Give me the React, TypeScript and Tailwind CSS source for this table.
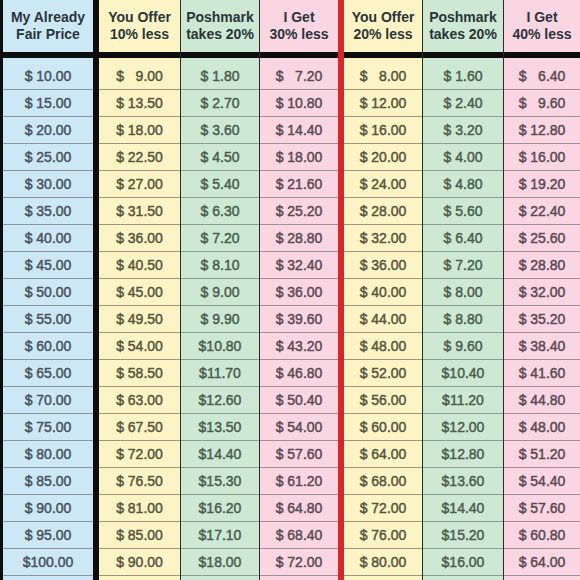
const bases = Array.from({ length: 19 }, (_, i) => 10 + i * 5);

// "$" + value, padded so the decimals line up inside a centred cell
const fmt = (v: number, w: number) => {
  const s = v.toFixed(2);
  if (s.length >= w) return "$" + s;
  return "$ " + "\u2007".repeat(w - s.length - 1) + s;
};

type Col = {
  title: [string, string];
  width: string;
  bg: string;
  text: string;
  line: string;
  values: string[];
};

// the printed chart says $85.00 on the $95 row, keep it
const offer10 = bases.map((b) => (b === 95 ? 85 : b * 0.9));

const columns: Col[] = [
  {
    title: ["My Already", "Fair Price"],
    width: "w-[90px]",
    bg: "bg-[#cde8f5]",
    text: "text-[#48535d]",
    line: "border-[#8a959c]",
    values: bases.map((b) => fmt(b, 6)),
  },
  {
    title: ["You Offer", "10% less"],
    width: "w-[81px]",
    bg: "bg-[#fcf4c4]",
    text: "text-[#56553f]",
    line: "border-[#9a977c]",
    values: offer10.map((v) => fmt(v, 6)),
  },
  {
    title: ["Poshmark", "takes 20%"],
    width: "w-[78px]",
    bg: "bg-[#cde8d3]",
    text: "text-[#4a5d4f]",
    line: "border-[#8a9d8f]",
    values: bases.map((b) => fmt(b * 0.18, 5)),
  },
  {
    title: ["I Get", "30% less"],
    width: "w-[78px]",
    bg: "bg-[#fad5e2]",
    text: "text-[#594b53]",
    line: "border-[#a08e96]",
    values: bases.map((b) => fmt(b * 0.72, 6)),
  },
  {
    title: ["You Offer", "20% less"],
    width: "w-[78px]",
    bg: "bg-[#fcf4c4]",
    text: "text-[#56553f]",
    line: "border-[#9a977c]",
    values: bases.map((b) => fmt(b * 0.8, 6)),
  },
  {
    title: ["Poshmark", "takes 20%"],
    width: "w-[80px]",
    bg: "bg-[#cde8d3]",
    text: "text-[#4a5d4f]",
    line: "border-[#8a9d8f]",
    values: bases.map((b) => fmt(b * 0.16, 5)),
  },
  {
    title: ["I Get", "40% less"],
    width: "w-[76px]",
    bg: "bg-[#fad5e2]",
    text: "text-[#594b53]",
    line: "border-[#a08e96]",
    values: bases.map((b) => fmt(b * 0.64, 6)),
  },
];

const Column = ({ col }: { col: Col }) => (
  <div className={`flex flex-col h-full shrink-0 ${col.width}`}>
    <div
      className={`h-[52px] shrink-0 flex flex-col items-center justify-center text-[14px] leading-[17px] font-bold text-[#2b343a] ${col.bg}`}
    >
      <span>{col.title[0]}</span>
      <span>{col.title[1]}</span>
    </div>
    <div className="h-[6px] shrink-0 bg-[#0d0d0d]" />
    <div className={`flex-1 flex flex-col ${col.bg}`}>
      {col.values.map((v, i) => (
        <div
          key={i}
          className={`shrink-0 flex items-center justify-center border-b text-[14px] whitespace-pre [-webkit-text-stroke:0.45px_currentColor] ${col.line} ${col.text} ${
            i === 0 ? "h-[32px] pt-[5px]" : "h-[27px]"
          }`}
        >
          {v}
        </div>
      ))}
    </div>
  </div>
);

const ThinLine = () => <div className="w-px h-full shrink-0 bg-[#2b2b2b]" />;

export default function App() {
  return (
    <div
      className="w-[580px] h-[580px] overflow-hidden flex bg-[#0d0d0d] pl-[3px]"
      style={{ fontFamily: '"Liberation Sans", Arial, sans-serif' }}
    >
      <Column col={columns[0]} />
      <div className="w-[6px] h-full shrink-0 bg-[#0d0d0d]" />
      <Column col={columns[1]} />
      <ThinLine />
      <Column col={columns[2]} />
      <ThinLine />
      <Column col={columns[3]} />
      <div className="w-[6px] h-full shrink-0 bg-[#d8262b]" />
      <Column col={columns[4]} />
      <ThinLine />
      <Column col={columns[5]} />
      <ThinLine />
      <Column col={columns[6]} />
    </div>
  );
}
